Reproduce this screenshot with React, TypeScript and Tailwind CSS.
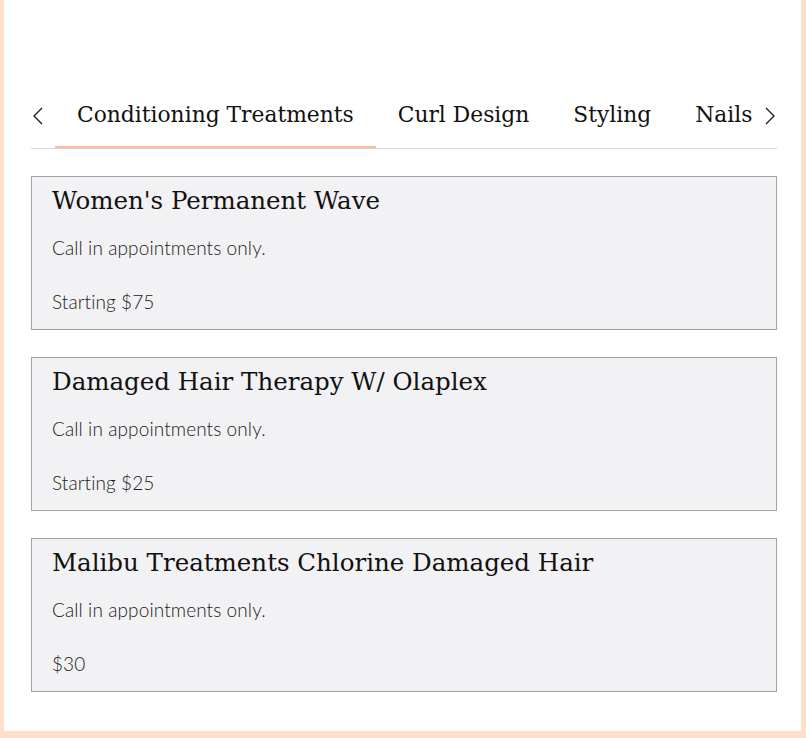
const tabs = ["Conditioning Treatments", "Curl Design", "Styling", "Nails"];

const services = [
  { title: "Women's Permanent Wave", note: "Call in appointments only.", price: "Starting $75" },
  { title: "Damaged Hair Therapy W/ Olaplex", note: "Call in appointments only.", price: "Starting $25" },
  { title: "Malibu Treatments Chlorine Damaged Hair", note: "Call in appointments only.", price: "$30" },
];

const serif = { fontFamily: '"DejaVu Serif", serif' };

function Chevron({ dir }: { dir: "left" | "right" }) {
  return (
    <svg width="12" height="18" viewBox="0 0 12 18" fill="none">
      <path
        d={dir === "left" ? "M10 1 L2 9 L10 17" : "M2 1 L10 9 L2 17"}
        stroke="#222"
        strokeWidth="1.4"
      />
    </svg>
  );
}

export default function App() {
  return (
    <div className="h-[738px] w-full bg-white border-l-4 border-r-[5px] border-b-[7px] border-[#ffdfc7] font-['Lato',sans-serif]">
      <div className="pl-[27px] pr-[24px] pt-[88px]">
        <div className="flex items-stretch border-b border-[#d6d6d6]">
          <button className="flex items-center pl-[1px] pr-[11px] pb-[5px]">
            <Chevron dir="left" />
          </button>
          <div className="flex flex-1 items-stretch overflow-hidden">
            {tabs.map((t, i) => (
              <div
                key={t}
                className={
                  "whitespace-nowrap px-[22px] pt-[10px] pb-[14px] text-[21.8px] leading-[34px] text-[#111] border-b-[3px] -mb-[1px] " +
                  (i === 0 ? "border-[#fbbd9e]" : "border-transparent")
                }
                style={serif}
              >
                {t}
              </div>
            ))}
          </div>
          <button className="flex items-center pl-[4px] pr-[1px] pb-[5px]">
            <Chevron dir="right" />
          </button>
        </div>

        <div className="mt-[27px] flex flex-col gap-[27px]">
          {services.map((s) => (
            <div
              key={s.title}
              className="h-[154px] border border-[#a3a3a3] bg-[#f2f2f4] px-[20px] pt-[6px]"
            >
              <div className="text-[24.5px] leading-[36px] text-[#111]" style={serif}>
                {s.title}
              </div>
              <div className="mt-[17px] text-[19px] leading-[24px] font-light tracking-[0.1px] text-[#1a1a1a]">{s.note}</div>
              <div className="mt-[30px] text-[19px] leading-[24px] font-light tracking-[0.1px] text-[#1a1a1a]">{s.price}</div>
            </div>
          ))}
        </div>
      </div>
    </div>
  );
}
